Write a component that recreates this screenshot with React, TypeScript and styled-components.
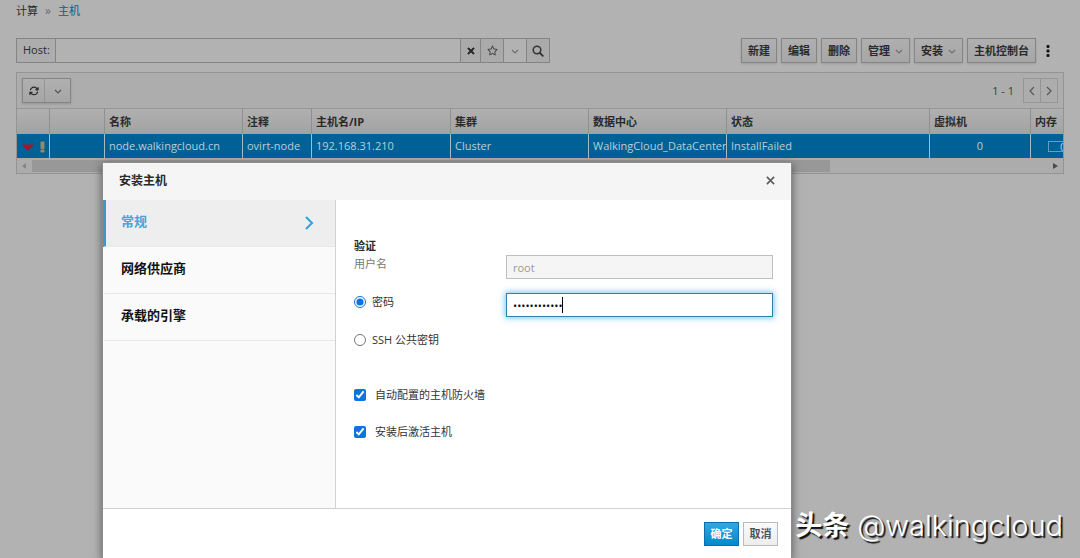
import React from "react";
import styled, { createGlobalStyle, css } from "styled-components";
import { FaXmark, FaRegStar, FaArrowsRotate } from "react-icons/fa6";

const GlobalStyle = createGlobalStyle`
  *, *::before, *::after { box-sizing: border-box; }
  body {
    margin: 0;
    background: #b2b2b2;
    color: #2a2a2c;
    font-family: "Open Sans", "Noto Sans CJK SC", sans-serif;
    font-size: 11px;
    line-height: 16px;
  }
  button, input { font: inherit; color: inherit; margin: 0; }
  button { cursor: pointer; padding: 0; }
`;

const Page = styled.div`
  position: relative;
  min-height: 100vh;
  overflow: hidden;
  padding: 3px 16px 0;
`;

const Breadcrumb = styled.nav`
  display: flex;
  gap: 7px;
  height: 16px;
  margin-bottom: 19px;

  a { color: #00618f; text-decoration: none; }
  a:first-child { color: #2a2a2c; }
  span { color: #6a6a6a; font-size: 12px; }
`;

const TopBar = styled.div`
  display: flex;
  justify-content: space-between;
  align-items: center;
  gap: 16px;
  margin-bottom: 9px;
`;

const SearchGroup = styled.form`
  display: flex;
  flex: 0 1 534px;
  height: 25px;
  border: 1px solid #848484;
`;

const SearchLabel = styled.label`
  padding: 3px 5px 3px 6px;
  background: #adadad;
  border-right: 1px solid #848484;
`;

const SearchInput = styled.input`
  flex: 1;
  min-width: 0;
  border: 0;
  background: #b2b2b2;
  outline: none;
`;

const AddonButton = styled.button<{ $plain?: boolean; $narrow?: boolean }>`
  display: grid;
  place-items: center;
  width: ${(p) => (p.$narrow ? 20 : 23)}px;
  border: 0;
  border-left: 1px solid #848484;
  background: ${(p) => (p.$plain ? "#b2b2b2" : "#aaaaaa")};
`;

const Actions = styled.div`
  display: flex;
  gap: 4px;
  margin-right: 8px;
`;

const ActionButton = styled.button`
  display: flex;
  align-items: center;
  gap: 5px;
  height: 25px;
  padding: 0 6px;
  border: 1px solid #858585;
  background: linear-gradient(#afafaf, #a6a6a6);
  box-shadow: 0 1px 2px rgba(0, 0, 0, 0.12);
  font-weight: 600;
  white-space: nowrap;
`;

const KebabButton = styled.button`
  display: grid;
  place-items: center;
  width: 16px;
  border: 0;
  background: none;
  color: #141414;
`;

const Panel = styled.section`
  border: 1px solid #949494;
  background: #adadad;
`;

const PanelToolbar = styled.div`
  display: flex;
  justify-content: space-between;
  align-items: center;
  height: 35px;
  padding: 0 5px;
`;

const ButtonPair = styled.div<{ $flat?: boolean }>`
  display: flex;
  height: 25px;
  border: 1px solid ${(p) => (p.$flat ? "#969696" : "#858585")};
  ${(p) =>
    !p.$flat &&
    css`
      background: linear-gradient(#b0b0b0, #a6a6a6);
      box-shadow: 0 1px 2px rgba(0, 0, 0, 0.15);
    `}
`;

const PairButton = styled.button<{ $width: number }>`
  display: grid;
  place-items: center;
  width: ${(p) => p.$width}px;
  border: 0;
  background: none;
  & + & { border-left: 1px solid #949494; }
`;

const Pager = styled.div`
  display: flex;
  align-items: center;
  gap: 9px;
  color: #3a3a3a;
`;

const HostTable = styled.table`
  width: 100%;
  table-layout: fixed;
  border-collapse: separate;
  border-spacing: 0;

  th, td {
    padding: 0 4px;
    overflow: hidden;
    white-space: nowrap;
    text-align: left;
  }
  th + th { border-left: 1px solid #8f8f8f; }
  td + td { border-left: 1px solid #a8bac4; }
  th {
    height: 26px;
    border-top: 1px solid #979797;
    background: linear-gradient(#b0b0b0, #a2a2a2);
    font-weight: 700;
  }
  td {
    height: 24px;
    background: #006197;
    color: #b9cfda;
  }
`;

const StatusCell = styled.td`
  svg { vertical-align: middle; margin-left: 1px; }
`;

const CountCell = styled.td`
  && { text-align: center; }
`;

const MemoryCell = styled.td`
  && { padding: 0 0 0 17px; }
`;

const MemoryBar = styled.span`
  display: block;
  height: 11px;
  border: 1px solid #6f9bb5;
  border-right: 0;
  padding-left: 11px;
  line-height: 9px;
`;

const ScrollTrack = styled.div`
  display: flex;
  align-items: center;
  height: 15px;
  padding: 0 5px;
  background: #acacac;
`;

const ScrollThumb = styled.div`
  width: 77%;
  height: 12px;
  margin: 0 auto 0 6px;
  background: #989898;
`;

const DialogLayer = styled.div`
  position: absolute;
  inset: 0;
  display: flex;
  padding: 162px 288px 0 102px;
`;

const Dialog = styled.section`
  display: flex;
  flex: 1;
  flex-direction: column;
  min-width: 0;
  background: #ffffff;
  border: 1px solid #8c8c8c;
  border-bottom: 0;
  box-shadow: 0 3px 9px rgba(0, 0, 0, 0.5);
`;

const DialogHeader = styled.header`
  display: flex;
  justify-content: space-between;
  align-items: center;
  height: 37px;
  padding: 0 16px 2px;
  background: #f5f5f5;

  h1 { margin: 0; font-size: 12px; font-weight: 600; }
  button {
    display: grid;
    place-items: center;
    border: 0;
    background: none;
    color: #5c5c5c;
  }
`;

const DialogBody = styled.div`
  display: flex;
  flex: 1;
`;

const SideTabs = styled.nav`
  flex: 0 0 233px;
  border-right: 1px solid #d1d1d1;
  background: #fafafa;
`;

const SideTab = styled.button<{ $active?: boolean }>`
  display: flex;
  justify-content: space-between;
  align-items: center;
  width: 100%;
  height: 47px;
  padding: 0 20px 0 15px;
  border: 0;
  border-left: 3px solid ${(p) => (p.$active ? "#3a9cbf" : "transparent")};
  border-bottom: 1px solid #e8e8e8;
  background: ${(p) => (p.$active ? "#eeeeee" : "transparent")};
  color: ${(p) => (p.$active ? "#45a5dc" : "#111111")};
  font-size: 13px;
  font-weight: 700;

  span { padding-bottom: 4px; }
`;

const Form = styled.form`
  flex: 1;
  min-width: 0;
  padding: 37px 18px 0;

  h2 { margin: 0; font-size: 11px; line-height: 18px; font-weight: 600; }
`;

const FormRow = styled.div`
  display: grid;
  grid-template-columns: 152px 1fr;
  align-items: start;
  min-height: 24px;
  margin-bottom: 14px;
`;

const FieldLabel = styled.label<{ $muted?: boolean; $gap?: number }>`
  display: flex;
  align-items: center;
  gap: ${(p) => p.$gap ?? 6}px;
  height: 18px;
  color: ${(p) => (p.$muted ? "#777777" : "#333333")};
  white-space: nowrap;

  input { width: 12px; height: 12px; accent-color: #0f73de; }
`;

const CheckList = styled.div`
  display: grid;
  gap: 19px;
  padding-top: 17px;
`;

const FieldBox = styled.div`
  position: relative;
`;

const TextBox = styled.input<{ $focused?: boolean }>`
  display: block;
  width: 100%;
  height: 24px;
  padding: 1px 6px 0;
  border: 1px solid ${(p) => (p.$focused ? "#2b84ae" : "#bfbfbf")};
  background: #ffffff;
  color: #111111;
  outline: none;
  ${(p) => p.$focused && "box-shadow: 0 0 6px 1px rgba(60, 176, 235, 0.7);"}
  &:disabled { background: #f5f5f5; color: #999999; }
`;

const Caret = styled.span`
  position: absolute;
  top: 4px;
  left: 56px;
  width: 1px;
  height: 16px;
  background: #000000;
`;

const DialogFooter = styled.footer`
  display: flex;
  justify-content: flex-end;
  gap: 4px;
  height: 50px;
  padding: 13px;
  border-top: 1px solid #d1d1d1;
`;

const FooterButton = styled.button<{ $primary?: boolean }>`
  width: 35px;
  height: 24px;
  border: 1px solid ${(p) => (p.$primary ? "#0a6fa8" : "#bbbbbb")};
  background: ${(p) => (p.$primary ? "linear-gradient(#39a5dc, #0088ce)" : "linear-gradient(#fafafa, #ededed)")};
  color: ${(p) => (p.$primary ? "#ffffff" : "#4d5258")};
  font-weight: 600;
`;

const Signature = styled.div`
  position: absolute;
  right: 17px;
  bottom: 12px;
  display: flex;
  align-items: center;
  gap: 8px;
  color: #ffffff;
  font-family: Inter, "Noto Sans CJK SC", sans-serif;
  font-size: 29px;
  font-weight: 300;
  line-height: 40px;
  text-shadow: 2px 2px 1px #111111;

  b { font-size: 27px; font-weight: 700; }
`;

type Direction = "down" | "left" | "right";
const chevronPaths: Record<Direction, string> = {
  down: "M1 3 L4 6 L7 3",
  left: "M6 0 L2 4 L6 8",
  right: "M2 0 L6 4 L2 8",
};

function Chevron({ to = "down", size = 8, weight = 1.2, color = "#555" }: { to?: Direction; size?: number; weight?: number; color?: string }) {
  return (
    <svg width={size} height={size} viewBox="0 0 8 8" fill="none" stroke={color} strokeWidth={weight} aria-hidden="true" overflow="visible">
      <path d={chevronPaths[to]} />
    </svg>
  );
}

const columns = [
  { title: "", width: 32 },
  { title: "", width: 55 },
  { title: "名称", width: 138 },
  { title: "注释", width: 69 },
  { title: "主机名/IP", width: 139 },
  { title: "集群", width: 138 },
  { title: "数据中心", width: 138 },
  { title: "状态", width: 203 },
  { title: "虚拟机", width: 101 },
  { title: "内存" },
];

const actions = [
  { label: "新建" },
  { label: "编辑" },
  { label: "删除" },
  { label: "管理", menu: true },
  { label: "安装", menu: true },
  { label: "主机控制台" },
];

const tabs = ["常规", "网络供应商", "承载的引擎"];

export default function App() {
  return (
    <Page>
      <GlobalStyle />
      <Breadcrumb>
        <a href="#compute">计算</a>
        <span>»</span>
        <a href="#hosts">主机</a>
      </Breadcrumb>

      <TopBar>
        <SearchGroup>
          <SearchLabel htmlFor="search">Host:</SearchLabel>
          <SearchInput id="search" />
          <AddonButton type="button" $narrow aria-label="Clear"><FaXmark size={10} strokeWidth={50} stroke="currentColor" /></AddonButton>
          <AddonButton type="button" aria-label="Bookmark"><FaRegStar size={11} color="#444" /></AddonButton>
          <AddonButton type="button" $plain aria-label="Bookmarks"><Chevron color="#6e6e6e" /></AddonButton>
          <AddonButton type="button" aria-label="Search">
            <svg width="12" height="12" viewBox="0 0 12 12" fill="none" stroke="#333" strokeWidth="1.5">
              <circle cx="5" cy="5" r="3.8" />
              <path d="M7.8 7.8 L10.8 10.8" strokeWidth="1.9" strokeLinecap="round" />
            </svg>
          </AddonButton>
        </SearchGroup>
        <Actions>
          {actions.map((a) => (
            <ActionButton key={a.label}>
              {a.label}
              {a.menu && <Chevron color="#6e6e6e" />}
            </ActionButton>
          ))}
          <KebabButton aria-label="More">
            <svg width="4" height="12" viewBox="0 0 4 12" fill="currentColor">
              <rect x="0.5" width="3" height="3" rx="1" />
              <rect x="0.5" y="4.5" width="3" height="3" rx="1" />
              <rect x="0.5" y="9" width="3" height="3" rx="1" />
            </svg>
          </KebabButton>
        </Actions>
      </TopBar>

      <Panel>
        <PanelToolbar>
          <ButtonPair>
            <PairButton $width={21} aria-label="Refresh"><FaArrowsRotate size={10} /></PairButton>
            <PairButton $width={26} aria-label="Refresh interval"><Chevron /></PairButton>
          </ButtonPair>
          <Pager>
            <span>1 - 1</span>
            <ButtonPair $flat>
              <PairButton $width={16} aria-label="Previous"><Chevron to="left" /></PairButton>
              <PairButton $width={17} aria-label="Next"><Chevron to="right" /></PairButton>
            </ButtonPair>
          </Pager>
        </PanelToolbar>
        <HostTable>
          <colgroup>
            {columns.map((c, i) => <col key={i} width={c.width} />)}
          </colgroup>
          <thead>
            <tr>{columns.map((c, i) => <th key={i}>{c.title}</th>)}</tr>
          </thead>
          <tbody>
            <tr>
              <StatusCell>
                <svg width="26" height="12" viewBox="0 0 26 12" aria-hidden="true">
                  <path d="M0 3.5 H12 L6.5 9.5 H5.5 Z" fill="#a3172b" />
                  <rect x="18.5" y="0.5" width="4" height="7.5" rx="1" fill="#9a8a63" />
                  <rect x="18.5" y="8.5" width="4" height="3" rx="1" fill="#9a8a63" />
                </svg>
              </StatusCell>
              <td />
              <td>node.walkingcloud.cn</td>
              <td>ovirt-node</td>
              <td>192.168.31.210</td>
              <td>Cluster</td>
              <td>WalkingCloud_DataCenter</td>
              <td>InstallFailed</td>
              <CountCell>0</CountCell>
              <MemoryCell><MemoryBar>0</MemoryBar></MemoryCell>
            </tr>
          </tbody>
        </HostTable>
        <ScrollTrack>
          <svg width="4" height="6" viewBox="0 0 4 6"><path d="M4 0 V6 L0 3 Z" fill="#858585" /></svg>
          <ScrollThumb />
          <svg width="5" height="6" viewBox="0 0 5 6"><path d="M0 0 V6 L5 3 Z" fill="#4c4c4c" /></svg>
        </ScrollTrack>
      </Panel>

      <DialogLayer>
        <Dialog role="dialog" aria-labelledby="dialog-title">
          <DialogHeader>
            <h1 id="dialog-title">安装主机</h1>
            <button aria-label="Close">
              <svg width="9" height="9" viewBox="0 0 10 10" stroke="currentColor" strokeWidth="1.8">
                <path d="M1 1 L9 9 M9 1 L1 9" />
              </svg>
            </button>
          </DialogHeader>
          <DialogBody>
            <SideTabs>
              {tabs.map((t, i) => (
                <SideTab key={t} $active={i === 0}>
                  <span>{t}</span>
                  {i === 0 && <Chevron to="right" size={12} weight={1.4} color="#3ba0d8" />}
                </SideTab>
              ))}
            </SideTabs>
            <Form>
              <h2>验证</h2>
              <FormRow>
                <FieldLabel $muted htmlFor="user">用户名</FieldLabel>
                <TextBox id="user" defaultValue="root" disabled />
              </FormRow>
              <FormRow>
                <FieldLabel>
                  <input type="radio" name="auth" defaultChecked />
                  密码
                </FieldLabel>
                <FieldBox>
                  <TextBox $focused type="password" aria-label="密码" defaultValue="walkingcloud" />
                  <Caret />
                </FieldBox>
              </FormRow>
              <FormRow>
                <FieldLabel>
                  <input type="radio" name="auth" />
                  SSH 公共密钥
                </FieldLabel>
              </FormRow>
              <CheckList>
                <FieldLabel $gap={9}>
                  <input type="checkbox" defaultChecked />
                  自动配置的主机防火墙
                </FieldLabel>
                <FieldLabel $gap={9}>
                  <input type="checkbox" defaultChecked />
                  安装后激活主机
                </FieldLabel>
              </CheckList>
            </Form>
          </DialogBody>
          <DialogFooter>
            <FooterButton $primary>确定</FooterButton>
            <FooterButton>取消</FooterButton>
          </DialogFooter>
        </Dialog>
      </DialogLayer>

      <Signature>
        <b>头条</b>
        <span>@walkingcloud</span>
      </Signature>
    </Page>
  );
}
